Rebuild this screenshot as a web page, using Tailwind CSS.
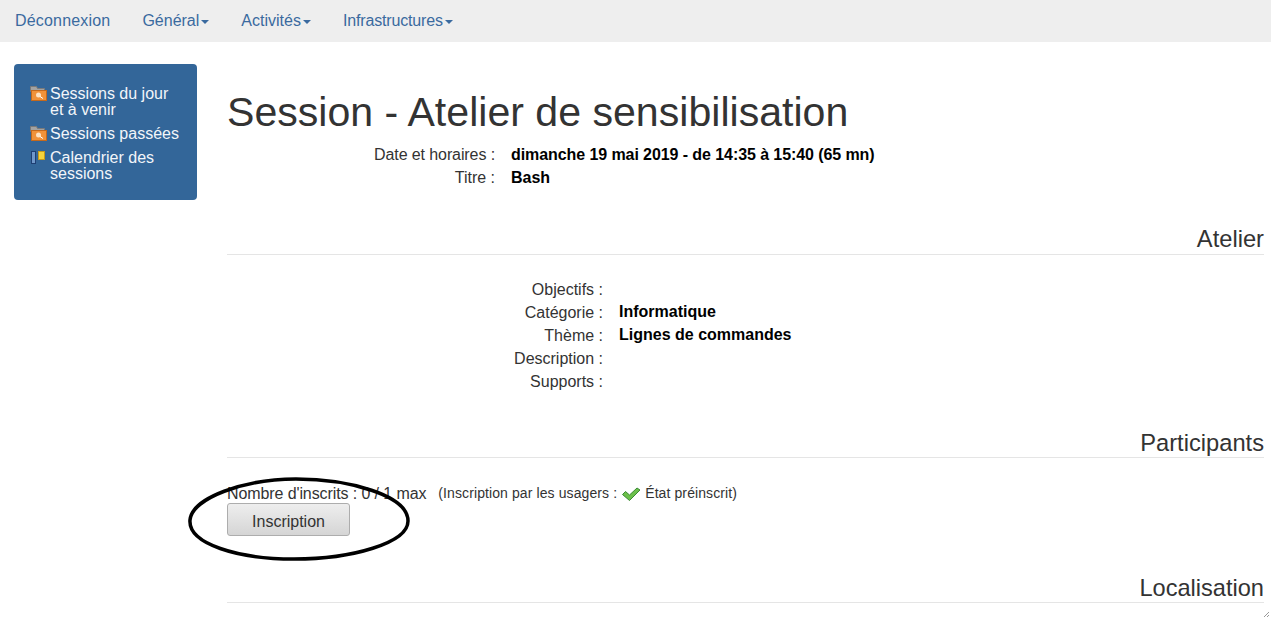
<!DOCTYPE html>
<html lang="fr">
<head>
    <meta charset="UTF-8">
    <title>Session</title>
    <script src="https://cdn.jsdelivr.net/npm/@tailwindcss/browser@4"></script>
</head>
<body class="bg-white text-[#333] font-['Liberation_Sans',Arial,sans-serif] text-[16px] leading-[23px] h-[619px] overflow-hidden relative">
    <nav class="h-[42px] bg-[#eeeeee] flex items-center pl-[15px] gap-[32px] text-[#3a6a9f] pb-[2px]">
        <a class="tracking-[0.18px]">Déconnexion</a>
        <a class="flex items-center gap-[2px]">Général<span class="w-0 h-0 border-x-[4px] border-x-transparent border-t-[4px] border-t-[#3a6a9f] mt-[3px]"></span></a>
        <a class="flex items-center gap-[2px]">Activités<span class="w-0 h-0 border-x-[4px] border-x-transparent border-t-[4px] border-t-[#3a6a9f] mt-[3px]"></span></a>
        <a class="flex items-center gap-[2px] tracking-[-0.15px]">Infrastructures<span class="w-0 h-0 border-x-[4px] border-x-transparent border-t-[4px] border-t-[#3a6a9f] mt-[3px]"></span></a>
    </nav>

    <div class="flex items-start">
        <aside class="w-[183px] h-[136px] ml-[14px] mt-[22px] bg-[#336699] rounded-[4px] text-[#f2f5f9] leading-[16px] pt-[22px] pl-[16px] pr-[14px] flex flex-col gap-[8px] shrink-0">
            <div class="flex gap-[3px]">
                <svg class="shrink-0" width="17" height="16" viewBox="0 0 17 16"><path d="M0.500 0.500h6l1 2h7v3h-14z" fill="#a3a3a3" stroke="#7a7a7a"/><rect x="1.500" y="4.500" width="15" height="10" fill="#f0923a" stroke="#c4691c"/><circle cx="8.500" cy="9" r="2.500" fill="#fde3c4"/><path d="M10 10.500l3 2" stroke="#fff"/></svg>
                <span>Sessions du jour et à venir</span>
            </div>
            <div class="flex gap-[3px]">
                <svg class="shrink-0" width="17" height="16" viewBox="0 0 17 16"><path d="M0.500 0.500h6l1 2h7v3h-14z" fill="#a3a3a3" stroke="#7a7a7a"/><rect x="1.500" y="4.500" width="15" height="10" fill="#f0923a" stroke="#c4691c"/><circle cx="8.500" cy="9" r="2.500" fill="#fde3c4"/><path d="M10 10.500l3 2" stroke="#fff"/></svg>
                <span>Sessions passées</span>
            </div>
            <div class="flex gap-[3px]">
                <svg class="shrink-0" width="17" height="16" viewBox="0 0 17 16"><rect x="1.500" y="1.500" width="4" height="12" fill="#6f97c9" stroke="#1f3f73"/><rect x="8.500" y="1.500" width="6" height="8" fill="#f5d33c" stroke="#c79a1a"/></svg>
                <span>Calendrier des sessions</span>
            </div>
        </aside>

        <main class="ml-[30px] w-[1037px] shrink-0">
            <h1 class="text-[41.1px] leading-[48px] mt-[46px] mb-[7px] font-normal">Session - Atelier de sensibilisation</h1>
            <div class="grid grid-cols-[268px_1fr] gap-x-[16px] text-black">
                <div class="text-right text-[#333] tracking-[-0.1px]">Date et horaires :</div><div class="font-bold tracking-[-0.08px]">dimanche 19 mai 2019 - de 14:35 à 15:40 (65 mn)</div>
                <div class="text-right text-[#333]">Titre :</div><div class="font-bold">Bash</div>
            </div>

            <h2 class="text-[23.7px] leading-[26px] text-right mt-[37px] pb-[2px] border-b border-[#e5e5e5]">Atelier</h2>
            <div class="grid grid-cols-[376px_1fr] gap-x-[16px] text-black mt-[23px]">
                <div class="text-right text-[#333]">Objectifs :</div><div class="font-bold"></div>
                <div class="text-right text-[#333]">Catégorie :</div><div class="font-bold -translate-y-px">Informatique</div>
                <div class="text-right text-[#333]">Thème :</div><div class="font-bold -translate-y-px">Lignes de commandes</div>
                <div class="text-right text-[#333]">Description :</div><div class="font-bold"></div>
                <div class="text-right text-[#333]">Supports :</div><div class="font-bold"></div>
            </div>

            <h2 class="text-[23.7px] leading-[26px] text-right mt-[37px] pb-[1px] border-b border-[#e5e5e5]">Participants</h2>
            <div class="mt-[26px] h-[19px] leading-[19px] flex items-center">
                <span class="tracking-[-0.1px]">Nombre d'inscrits : 0 / 1 max</span>
                <span class="ml-[12px] text-[14px] flex items-center tracking-[0.1px]">(Inscription par les usagers :
                    <svg class="mx-[4px]" width="20" height="16" viewBox="0 0 20 16"><path d="M1.500 8.500l3-3 4 3.500 7.500-7 3 2-10.500 10.500z" fill="#6cc04a" stroke="#3a8a34" stroke-linejoin="round"/></svg>
                    État préinscrit)</span>
            </div>
            <button class="block w-[123px] h-[33px] rounded-[3px] border border-[#adadad] bg-linear-to-b from-[#eeeeee] to-[#d5d5d5] text-[#333] pt-[3px]">Inscription</button>

            <h2 class="text-[23.6px] leading-[26px] text-right mt-[39px] pb-[1px] border-b border-[#e5e5e5]">Localisation</h2>
        </main>
    </div>

    <svg class="absolute left-[186px] top-[476px] pointer-events-none" width="226" height="86" viewBox="0 0 226 86"><path d="M4 44C6 22 58 3 110 3c52 0 112 16 112 42 0 22-56 38-114 38C52 83 2 68 4 44z" fill="none" stroke="#000" stroke-width="3.500"/></svg>
    <svg class="absolute right-[1px] bottom-[1px]" width="7" height="7" viewBox="0 0 7 7"><path d="M1 6l5-5M4 6l2-2" stroke="#999"/></svg>
</body>
</html>
